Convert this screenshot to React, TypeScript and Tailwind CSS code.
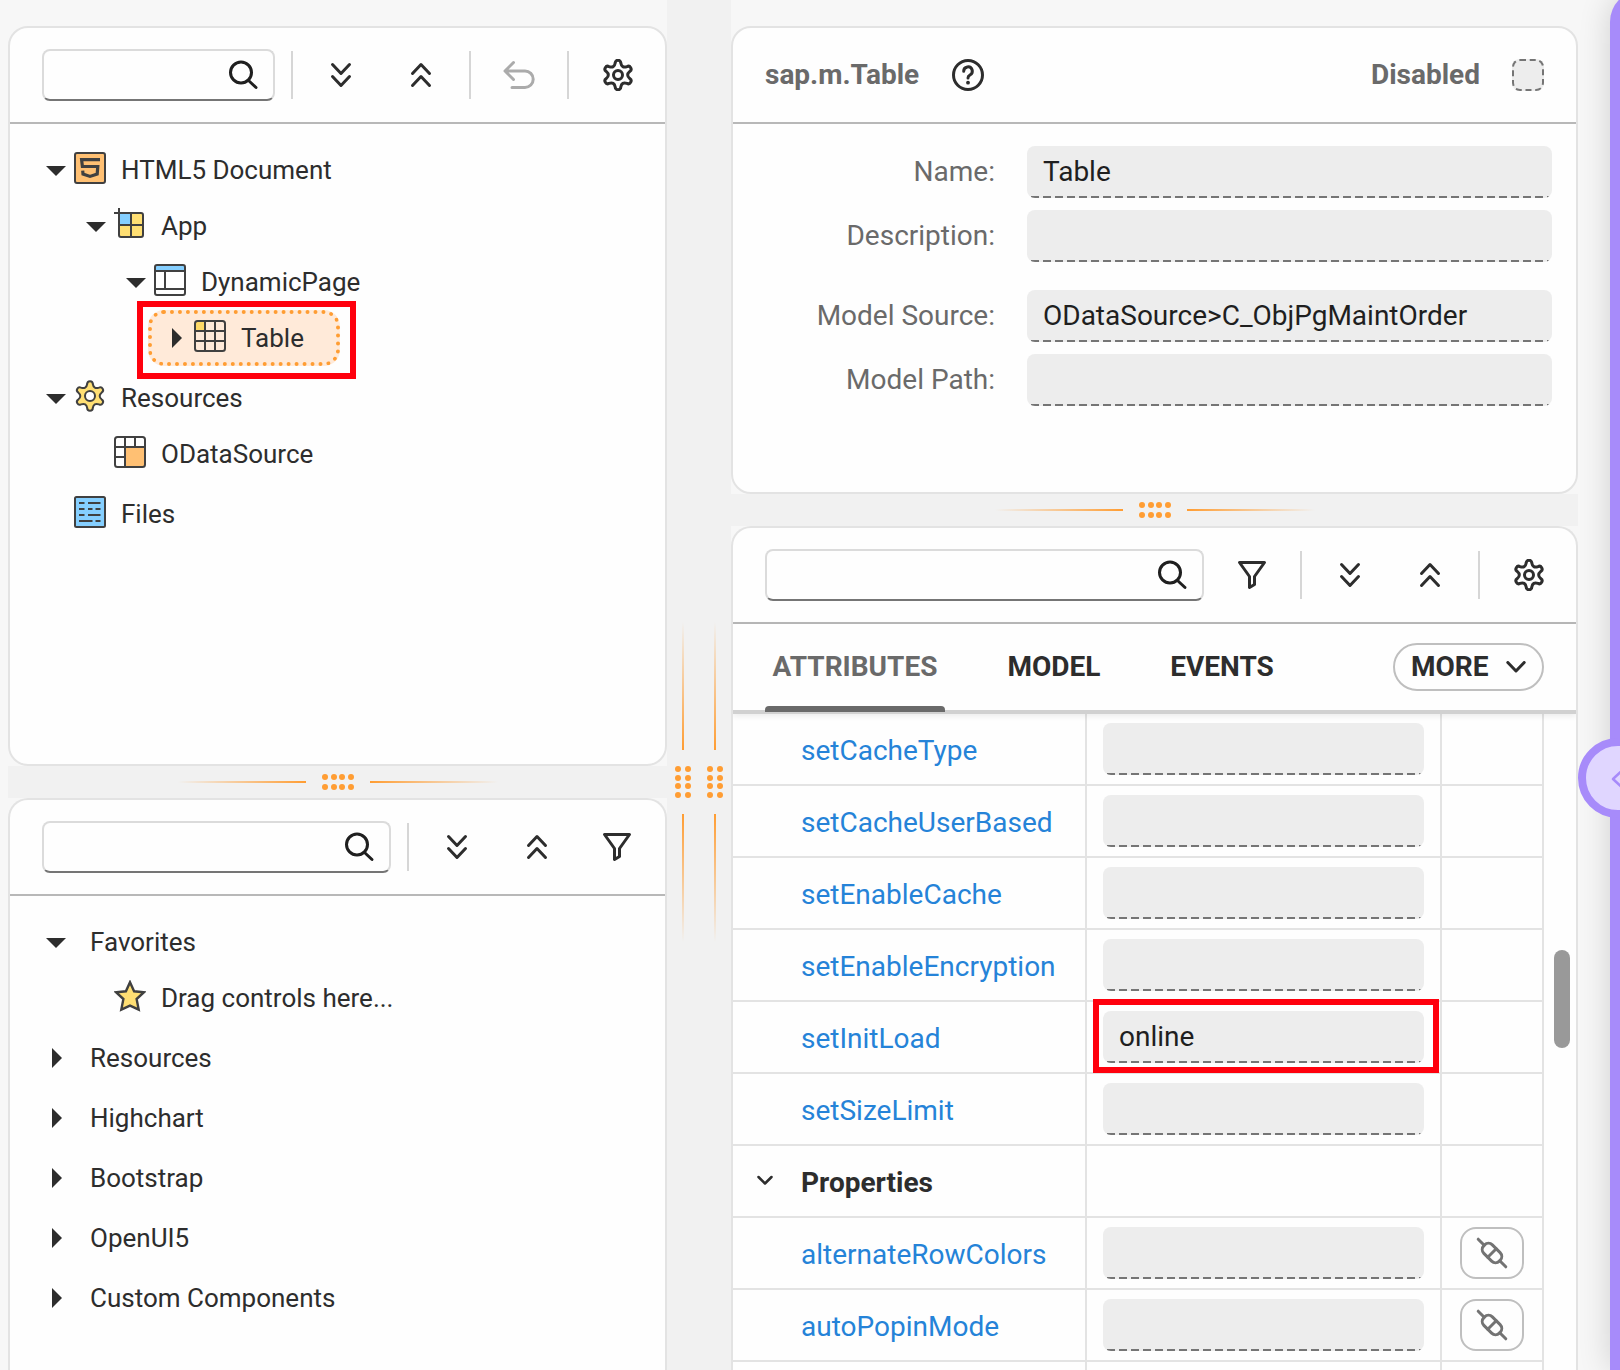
import React from "react";

type IconProps = { className?: string };

function Stroke({ children, className = "text-[#2d2d2d]" }: IconProps & { children: React.ReactNode }) {
  return (
    <svg
      viewBox="0 0 32 32"
      className={`size-8 shrink-0 ${className}`}
      fill="none"
      stroke="currentColor"
      strokeWidth={3}
      strokeLinecap="round"
      strokeLinejoin="round"
      aria-hidden="true"
    >
      {children}
    </svg>
  );
}

/* Outline of a six-toothed cog centred on 16,16. */
function cogPath() {
  const at = (x: number, y: number, k: number) => {
    const a = (k * Math.PI) / 3;
    const px = 16 + x * Math.cos(a) - y * Math.sin(a);
    const py = 16 + x * Math.sin(a) + y * Math.cos(a);
    return `${px.toFixed(2)} ${py.toFixed(2)}`;
  };
  let d = `M${at(-2.8, -12, 0)}`;
  for (let k = 0; k < 6; k++) {
    d += `A2.8 2.8 0 0 1 ${at(2.8, -12, k)}`;
    d += `C${at(3.4, -8.4, k)} ${at(-3.4, -8.4, k + 1)} ${at(-2.8, -12, k + 1)}`;
  }
  return d + "Z";
}
const COG = cogPath();

const SearchIcon = () => (
  <Stroke className="text-[#1f1f1f]">
    <circle cx="14" cy="13.5" r="10.5" />
    <path d="M21.5 21.5 29 28.5" />
  </Stroke>
);
const CollapseIcon = () => (
  <Stroke>
    <path d="M7.5 5.5 16 14.5 24.5 5.5M7.5 17.5 16 26.5 24.5 17.5" />
  </Stroke>
);
const ExpandIcon = () => (
  <Stroke>
    <path d="M7.5 14.5 16 5.5 24.5 14.5M7.5 26.5 16 17.5 24.5 26.5" />
  </Stroke>
);
const UndoIcon = () => (
  <Stroke className="text-[#ababab]">
    <path d="M10.5 3.5 2 12 10.5 20.5M2.5 12H22a8.2 8.2 0 0 1 0 16.4H9" />
  </Stroke>
);
const SettingsIcon = () => (
  <Stroke>
    <g transform="translate(1 0)">
      <path d={COG} />
      <circle cx="16" cy="16" r="4.5" />
    </g>
  </Stroke>
);
const FilterIcon = () => (
  <Stroke>
    <path d="M3.5 3.5H28.5L18.5 17.5V25.5L13.5 28.5V17.5Z" />
  </Stroke>
);
const HelpIcon = () => (
  <Stroke>
    <circle cx="16" cy="16" r="14.5" />
    <path d="M11.7 12.2a4.3 4.3 0 1 1 6.3 3.8c-1.4.8-2 1.4-2 3" />
    <circle cx="16" cy="23.7" r="1.9" fill="currentColor" stroke="none" />
  </Stroke>
);
const BindIcon = () => (
  <Stroke className="text-[#737373]">
    <g transform="rotate(45 16 16)">
      <path d="M-3.5 16H5M27 16H35.5M16 10V22" />
      <rect x="5" y="10" width="22" height="12" rx="5.5" />
    </g>
  </Stroke>
);

function Glyph({ children }: { children: React.ReactNode }) {
  return (
    <svg
      viewBox="0 0 32 32"
      className="mb-1 size-8 shrink-0"
      fill="none"
      stroke="#404040"
      strokeWidth={2}
      strokeLinejoin="round"
      aria-hidden="true"
    >
      {children}
    </svg>
  );
}

const Html5Glyph = () => (
  <Glyph>
    <rect x="1" y="1" width="30" height="30" rx="2" fill="#ffc073" />
    <path d="M26 7.7H7.6L8.4 14.5H23.8L23.2 22L16 24.4L9 22L8.7 18.7" strokeWidth={3.2} strokeLinejoin="miter" />
  </Glyph>
);
const AppGlyph = () => (
  <Glyph>
    <rect x="5" y="5" width="24" height="24" rx="2.5" fill="#ffdf73" stroke="none" />
    <path d="M5 5H17V17H5Z" fill="#85cfff" stroke="none" />
    <path d="M5 0V27a2 2 0 0 0 2 2H27a2 2 0 0 0 2-2V7a2 2 0 0 0-2-2H0M17 5V29M5 17H29" />
  </Glyph>
);
const PageGlyph = () => (
  <Glyph>
    <rect x="1" y="1" width="30" height="6" rx="1" fill="#85cfff" stroke="none" />
    <rect x="1" y="1" width="30" height="30" rx="2" />
    <path d="M1 7H31M11 7V25M1 25H31" />
  </Glyph>
);
const TableGlyph = () => (
  <Glyph>
    <rect x="1" y="1" width="10" height="10" rx="1" fill="#ffd966" stroke="none" />
    <rect x="1" y="1" width="30" height="30" rx="2.5" />
    <path d="M1 11H31M1 21H31M11 1V31M21 1V31" />
  </Glyph>
);
const CogGlyph = () => (
  <Glyph>
    <path d={`${COG}M21 16A5 5 0 1 0 11 16A5 5 0 1 0 21 16Z`} fill="#ffdf73" fillRule="evenodd" />
  </Glyph>
);
const DataGlyph = () => (
  <Glyph>
    <path d="M11 11H31V29a2 2 0 0 1-2 2H11Z" fill="#ffc073" stroke="none" />
    <rect x="1" y="1" width="30" height="30" rx="2.5" />
    <path d="M1 11H31M11 1V31M21 1V11M1 21H11" />
  </Glyph>
);
const FilesGlyph = () => (
  <Glyph>
    <rect x="1" y="1" width="30" height="30" rx="1.5" fill="#85cfff" />
    <path d="M5 7H10.5M14 7H26.5M5 13H10.5M14 13H18.5M21.5 13H26.5M5 19H10.5M14 19H26.5M5 25H18.5M21.5 25H26.5" />
  </Glyph>
);
const StarGlyph = () => (
  <Glyph>
    <path
      d="M16 2.2 20.1 11.3 30 12.2 22.6 19 24.7 29.6 16 25.6 7.3 29.6 9.4 19 2 12.2 11.9 11.3Z"
      fill="#ffdf73"
      strokeWidth={2.4}
      strokeLinejoin="miter"
    />
  </Glyph>
);

function Caret({ state }: { state?: "open" | "closed" }) {
  return (
    <svg viewBox="0 0 20 20" className="size-5 shrink-0" fill="#2d2d2d" aria-hidden="true">
      {state === "open" && <path d="M0 6H20L10 16Z" />}
      {state === "closed" && <path d="M6 0 16 10 6 20Z" />}
    </svg>
  );
}

function ToolButton({ label, children, disabled }: { label: string; children: React.ReactNode; disabled?: boolean }) {
  return (
    <button type="button" aria-label={label} disabled={disabled} className="flex h-12 w-20 shrink-0 items-center justify-center">
      {children}
    </button>
  );
}

const Separator = () => <div className="mx-2 h-12 w-0.5 shrink-0 bg-[#d6d6d6]" />;

function SearchBox({ label }: { label: string }) {
  return (
    <label className="mr-2 flex h-[52px] min-w-0 flex-1 items-center rounded-lg border-2 border-[#dbdbdb] border-b-[#757575] pr-3.5">
      <input type="text" aria-label={label} className="h-full min-w-0 flex-1 bg-transparent px-3 text-[28px] outline-none" />
      <SearchIcon />
    </label>
  );
}

function Toolbar({ children }: { children: React.ReactNode }) {
  return (
    <div className="flex h-24 shrink-0 items-center border-b-2 border-[#b8b8b8] pr-2 pl-8">{children}</div>
  );
}

type Node = {
  label: string;
  depth?: number;
  state?: "open" | "closed";
  icon?: React.ReactNode;
  selected?: boolean;
  spaced?: boolean;
};

const INDENT = ["ml-[18px]", "ml-[58px]", "ml-[98px]", "ml-[138px]"];

function Tree({ nodes }: { nodes: Node[] }) {
  return (
    <ul className="pt-[18px] text-[26px] text-[#2d2d2d]">
      {nodes.map((n) => (
        <li key={n.label} className={`flex ${INDENT[n.depth ?? 0]} ${n.spaced ? "mt-1" : ""}`}>
          <button
            type="button"
            className={`relative flex h-14 items-center rounded-2xl border-4 border-dotted pr-8 pl-3.5 whitespace-nowrap ${
              n.selected ? "border-[#ff9d33] bg-[#ffead9]" : "border-transparent"
            }`}
          >
            <Caret state={n.state} />
            {n.icon ? <span className="mr-[15px] ml-2 flex">{n.icon}</span> : <span className="w-6" />}
            {n.label}
            {n.selected && (
              <span className="absolute -top-[13px] -right-5 -bottom-[17px] -left-[15px] border-6 border-[#ff000d]" />
            )}
          </button>
        </li>
      ))}
    </ul>
  );
}

const OUTLINE: Node[] = [
  { label: "HTML5 Document", state: "open", icon: <Html5Glyph /> },
  { label: "App", depth: 1, state: "open", icon: <AppGlyph /> },
  { label: "DynamicPage", depth: 2, state: "open", icon: <PageGlyph /> },
  { label: "Table", depth: 3, state: "closed", icon: <TableGlyph />, selected: true },
  { label: "Resources", state: "open", icon: <CogGlyph />, spaced: true },
  { label: "ODataSource", depth: 1, icon: <DataGlyph /> },
  { label: "Files", icon: <FilesGlyph />, spaced: true },
];

const LIBRARY: Node[] = [
  { label: "Favorites", state: "open" },
  { label: "Drag controls here...", depth: 1, icon: <StarGlyph /> },
  { label: "Resources", state: "closed", spaced: true },
  { label: "Highchart", state: "closed", spaced: true },
  { label: "Bootstrap", state: "closed", spaced: true },
  { label: "OpenUI5", state: "closed", spaced: true },
  { label: "Custom Components", state: "closed", spaced: true },
];

const DOTS = [3, 12, 20, 29];

function HorizontalSplitter() {
  return (
    <div className="flex h-8 shrink-0 items-center justify-center gap-4 bg-[#f1f1f1]">
      <div className="h-0.5 w-32 bg-linear-to-l from-[#ff9d33] to-transparent" />
      <svg viewBox="0 0 32 16" className="h-4 w-8" fill="#ff9d33" aria-hidden="true">
        {DOTS.map((x) => (
          <React.Fragment key={x}>
            <circle cx={x} cy="3" r="3" />
            <circle cx={x} cy="13" r="3" />
          </React.Fragment>
        ))}
      </svg>
      <div className="h-0.5 w-32 bg-linear-to-r from-[#ff9d33] to-transparent" />
    </div>
  );
}

function VerticalSplitter() {
  return (
    <div className="flex w-8 shrink-0 flex-col items-center justify-center gap-4 bg-[#f1f1f1] pt-[194px]">
      <div className="h-32 w-0.5 bg-linear-to-t from-[#ff9d33] to-transparent" />
      <svg viewBox="0 0 16 32" className="h-8 w-4" fill="#ff9d33" aria-hidden="true">
        {DOTS.map((y) => (
          <React.Fragment key={y}>
            <circle cx="3" cy={y} r="3" />
            <circle cx="13" cy={y} r="3" />
          </React.Fragment>
        ))}
      </svg>
      <div className="h-32 w-0.5 bg-linear-to-b from-[#ff9d33] to-transparent" />
    </div>
  );
}

function Field({ id, label, value = "", bare }: { id: string; label: string; value?: string; bare?: boolean }) {
  return (
    <input
      id={id}
      type="text"
      readOnly
      value={value}
      aria-label={bare ? label : undefined}
      className="block h-[52px] w-full min-w-0 rounded-lg bg-[#ededed] bg-[repeating-linear-gradient(to_right,transparent_0_4px,#757575_4px_12px)] bg-[length:100%_2px] bg-bottom bg-no-repeat px-4 pb-0.5 text-[28px] text-[#1f1f1f] outline-none"
    />
  );
}

function FormRow({ id, label, value }: { id: string; label: string; value?: string }) {
  return (
    <div className="flex items-center gap-8">
      <label htmlFor={id} className="w-[262px] shrink-0 text-right text-[28px] leading-9 text-[#6a6a6a]">
        {label}
      </label>
      <Field id={id} label={label} value={value} />
    </div>
  );
}

type Attribute = { name: string; value?: string; bindable?: boolean; group?: boolean; marked?: boolean };

const ATTRIBUTES: Attribute[] = [
  { name: "setCacheType" },
  { name: "setCacheUserBased" },
  { name: "setEnableCache" },
  { name: "setEnableEncryption" },
  { name: "setInitLoad", value: "online", marked: true },
  { name: "setSizeLimit" },
  { name: "Properties", group: true },
  { name: "alternateRowColors", bindable: true },
  { name: "autoPopinMode", bindable: true },
];

const CELL = "h-[72px] border-r-2 border-b-2 border-[#e3e3e3] p-0";

function AttributeTable() {
  return (
    <table className="w-full table-fixed border-separate border-spacing-0 text-[28px]">
      <colgroup>
        <col className="w-[354px]" />
        <col />
        <col className="w-[102px]" />
      </colgroup>
      <tbody>
        {ATTRIBUTES.map((a) => (
          <tr key={a.name}>
            <th scope="row" className={`${CELL} text-left font-normal`}>
              {a.group ? (
                <button type="button" className="flex items-center pl-6 font-bold text-[#2d2d2d]">
                  <svg viewBox="0 0 16 16" className="mr-7 size-4" fill="none" stroke="currentColor" strokeWidth={2.5} strokeLinecap="round" strokeLinejoin="round" aria-hidden="true">
                    <path d="M1.5 4 8 10.5 14.5 4" />
                  </svg>
                  <span className="pt-1">{a.name}</span>
                </button>
              ) : (
                <a href={`#${a.name}`} className="block pt-1 pl-[68px] text-[#2583d8]">
                  {a.name}
                </a>
              )}
            </th>
            <td className={`${CELL} px-4`}>
              {!a.group && (
                <div className="relative">
                  <Field id={a.name} label={a.name} value={a.value} bare />
                  {a.marked && (
                    <span className="absolute -top-3 -right-[15px] -bottom-2.5 -left-2.5 border-6 border-[#ff000d]" />
                  )}
                </div>
              )}
            </td>
            <td className={CELL}>
              {a.bindable && (
                <button type="button" aria-label={`Bind ${a.name}`} className="mx-auto flex h-[52px] w-16 items-center justify-center rounded-2xl border-2 border-[#bfbfbf]">
                  <BindIcon />
                </button>
              )}
            </td>
          </tr>
        ))}
        <tr aria-hidden="true">
          <td className={CELL} />
          <td className={CELL} />
          <td className={CELL} />
        </tr>
      </tbody>
    </table>
  );
}

const PANEL = "flex min-h-0 basis-0 flex-col overflow-hidden border-2 border-[#e3e3e3] bg-[#fefefe]";

export default function App() {
  return (
    <div className="flex h-screen overflow-hidden bg-[#f7f7f7] pl-2 font-[Roboto,'Liberation_Sans',sans-serif]">
      <div className="flex min-w-0 flex-[659_1_0] flex-col pt-[26px]">
        <section className={`${PANEL} grow-[736] rounded-[20px]`}>
          <Toolbar>
            <SearchBox label="Search outline" />
            <Separator />
            <ToolButton label="Expand all"><CollapseIcon /></ToolButton>
            <ToolButton label="Collapse all"><ExpandIcon /></ToolButton>
            <Separator />
            <ToolButton label="Undo" disabled><UndoIcon /></ToolButton>
            <Separator />
            <ToolButton label="Settings"><SettingsIcon /></ToolButton>
          </Toolbar>
          <Tree nodes={OUTLINE} />
        </section>
        <HorizontalSplitter />
        <section className={`${PANEL} grow-[570] rounded-t-[20px] border-b-0`}>
          <Toolbar>
            <SearchBox label="Search controls" />
            <Separator />
            <ToolButton label="Expand all"><CollapseIcon /></ToolButton>
            <ToolButton label="Collapse all"><ExpandIcon /></ToolButton>
            <ToolButton label="Filter"><FilterIcon /></ToolButton>
          </Toolbar>
          <Tree nodes={LIBRARY} />
        </section>
      </div>

      <VerticalSplitter />
      <VerticalSplitter />

      <div className="flex min-w-0 flex-[847_1_0] flex-col pt-[26px]">
        <section className={`${PANEL} grow-[464] rounded-[20px]`}>
          <header className="flex h-24 shrink-0 items-center border-b-2 border-[#b8b8b8] px-8 text-[28px] font-bold text-[#6a6a6a]">
            <h1>sap.m.Table</h1>
            <button type="button" aria-label="Help" className="ml-[33px]">
              <HelpIcon />
            </button>
            <label htmlFor="disabled" className="mr-8 ml-auto">Disabled</label>
            <input
              id="disabled"
              type="checkbox"
              className="size-8 appearance-none rounded-lg border-2 border-dashed border-[#757575] bg-[#ededed]"
            />
          </header>
          <form className="flex flex-col gap-3 pt-[22px] pr-6">
            <FormRow id="name" label="Name:" value="Table" />
            <FormRow id="description" label="Description:" />
            <div className="h-1" />
            <FormRow id="model-source" label="Model Source:" value="ODataSource>C_ObjPgMaintOrder" />
            <FormRow id="model-path" label="Model Path:" />
          </form>
        </section>
        <HorizontalSplitter />
        <section className={`${PANEL} grow-[842] rounded-t-[20px] border-b-0`}>
          <Toolbar>
            <SearchBox label="Search attributes" />
            <ToolButton label="Filter"><FilterIcon /></ToolButton>
            <Separator />
            <ToolButton label="Expand all"><CollapseIcon /></ToolButton>
            <ToolButton label="Collapse all"><ExpandIcon /></ToolButton>
            <Separator />
            <ToolButton label="Settings"><SettingsIcon /></ToolButton>
          </Toolbar>
          <nav className="z-10 flex h-[90px] shrink-0 items-center border-b-4 border-[#d1d1d1] px-8 text-[28px] font-bold text-[#2d2d2d] shadow-[0_2px_6px_rgba(0,0,0,0.08)]">
            <button type="button" className="relative h-full w-[180px] text-[#6a6a6a]">
              ATTRIBUTES
              <span className="absolute inset-x-0 -bottom-0.5 h-1.5 rounded-t bg-[#6a6a6a]" />
            </button>
            <button type="button" className="ml-[54px] h-full w-[110px]">MODEL</button>
            <button type="button" className="ml-[54px] h-full w-[118px]">EVENTS</button>
            <button type="button" className="ml-auto flex h-12 w-[151px] items-center justify-between rounded-3xl border-2 border-[#bfbfbf] px-4">
              MORE
              <svg viewBox="0 0 20 12" className="h-3 w-5" fill="none" stroke="currentColor" strokeWidth={3} strokeLinecap="round" strokeLinejoin="round" aria-hidden="true">
                <path d="M1.8 1.5 10 10 18.2 1.5" />
              </svg>
            </button>
          </nav>
          <div className="flex min-h-0 flex-1">
            <div className="min-w-0 flex-1 overflow-hidden">
              <AttributeTable />
            </div>
            <div className="flex w-8 shrink-0 justify-center pt-[236px]">
              <div className="mr-1.5 ml-2.5 h-[98px] w-4 rounded-full bg-[#999999]" />
            </div>
          </div>
        </section>
      </div>

      <aside className="relative w-[42px] shrink-0">
        <div className="absolute -top-2.5 bottom-0 left-8 w-24 rounded-tl-[32px] bg-[#a78bfa] shadow-[0_0_32px_rgba(0,0,0,0.16)]" />
        <button
          type="button"
          aria-label="Open assistant"
          className="absolute top-[738px] left-0 flex size-20 items-center rounded-full border-8 border-[#a78bfa] bg-[#e0d6ff] pl-6"
        >
          <svg viewBox="0 0 32 32" className="size-8 shrink-0" fill="#e0d6ff" stroke="#a78bfa" strokeWidth={2.5} strokeLinejoin="round" aria-hidden="true">
            <path d="M3 17 16 5V12H29V22H16V29Z" />
          </svg>
        </button>
      </aside>
    </div>
  );
}
